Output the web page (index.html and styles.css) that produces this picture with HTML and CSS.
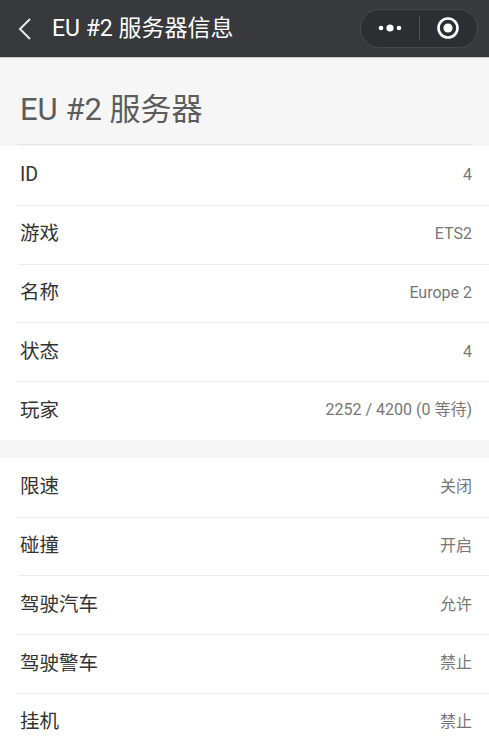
FILE: index.html
```html
<!DOCTYPE html>
<html lang="zh-CN">
<head>
<meta charset="utf-8">
<title>EU #2 服务器信息</title>
<link rel="stylesheet" href="styles.css">
</head>
<body>
<header class="navbar">
  <div class="nav-left">
    <svg class="back" width="14" height="24" viewBox="0 0 14 24"><path d="M12 2 L2 12 L12 22" fill="none" stroke="#e8e8e8" stroke-width="2"/></svg>
    <span class="nav-title">EU #2 服务器信息</span>
  </div>
  <div class="capsule">
    <div class="cap-btn">
      <svg width="30" height="10" viewBox="0 0 30 10"><circle cx="6" cy="5" r="2.3" fill="#fff"/><circle cx="15" cy="5" r="3.6" fill="#fff"/><circle cx="24" cy="5" r="2.3" fill="#fff"/></svg>
    </div>
    <div class="cap-div"></div>
    <div class="cap-btn">
      <svg width="24" height="24" viewBox="0 0 24 24"><circle cx="12" cy="12" r="9.5" fill="none" stroke="#fff" stroke-width="2.6"/><circle cx="12" cy="12" r="4.6" fill="#fff"/></svg>
    </div>
  </div>
</header>
<main class="page">
  <section class="head">
    <h1 class="head-title">EU #2 服务器</h1>
  </section>
  <section class="group">
    <div class="row"><span class="label">ID</span><span class="value">4</span></div>
    <div class="row"><span class="label">游戏</span><span class="value">ETS2</span></div>
    <div class="row"><span class="label">名称</span><span class="value">Europe 2</span></div>
    <div class="row"><span class="label">状态</span><span class="value">4</span></div>
    <div class="row"><span class="label">玩家</span><span class="value">2252 / 4200 (0 等待)</span></div>
  </section>
  <section class="group">
    <div class="row"><span class="label">限速</span><span class="value">关闭</span></div>
    <div class="row"><span class="label">碰撞</span><span class="value">开启</span></div>
    <div class="row"><span class="label">驾驶汽车</span><span class="value">允许</span></div>
    <div class="row"><span class="label">驾驶警车</span><span class="value">禁止</span></div>
    <div class="row"><span class="label">挂机</span><span class="value">禁止</span></div>
  </section>
</main>
</body>
</html>
```
FILE: styles.css
```css
* { box-sizing: border-box; }
html, body {
  margin: 0;
  padding: 0;
  background: #f6f6f6;
  font-family: Roboto, "Noto Sans CJK SC", sans-serif;
}
.navbar {
  height: 58px;
  background: #38393d;
  display: flex;
  align-items: center;
  justify-content: space-between;
  padding: 0 11px 0 18px;
  border-bottom: 1px solid #c9c9c9;
}
.nav-left {
  display: flex;
  align-items: center;
  gap: 20px;
}
.back { display: block; margin-top: 1px; }
.nav-title {
  color: #fff;
  font-size: 23px;
  line-height: 1;
  margin-top: -1px;
}
.capsule {
  width: 118px;
  height: 39px;
  border-radius: 20px;
  background: #2d2e32;
  border: 1px solid #47484c;
  display: flex;
  align-items: center;
  margin-top: -1px;
}
.cap-btn {
  flex: 1;
  display: flex;
  align-items: center;
  justify-content: center;
}
.cap-btn svg { display: block; }
.cap-div {
  width: 1px;
  height: 24px;
  background: #4d4e52;
}
.head {
  height: 88px;
  padding: 0 17px 0 18px;
}
.head-title {
  margin: 0;
  height: 87px;
  padding: 36px 0 0 2px;
  font-size: 31px;
  font-weight: 400;
  line-height: 1;
  color: #5c5c5c;
  border-bottom: 1px solid #e6e6e6;
}
.group {
  background: #fff;
  padding-left: 18px;
  margin-bottom: 18px;
}
.row {
  height: 58.75px;
  display: flex;
  align-items: center;
  justify-content: space-between;
  padding: 0 17px 1px 2px;
  border-top: 1px solid #ececec;
}
.row:first-child { border-top: none; }
.label {
  font-size: 19.5px;
  line-height: 1;
  color: #333;
}
.value {
  font-size: 16px;
  line-height: 1;
  color: #777;
}
```
